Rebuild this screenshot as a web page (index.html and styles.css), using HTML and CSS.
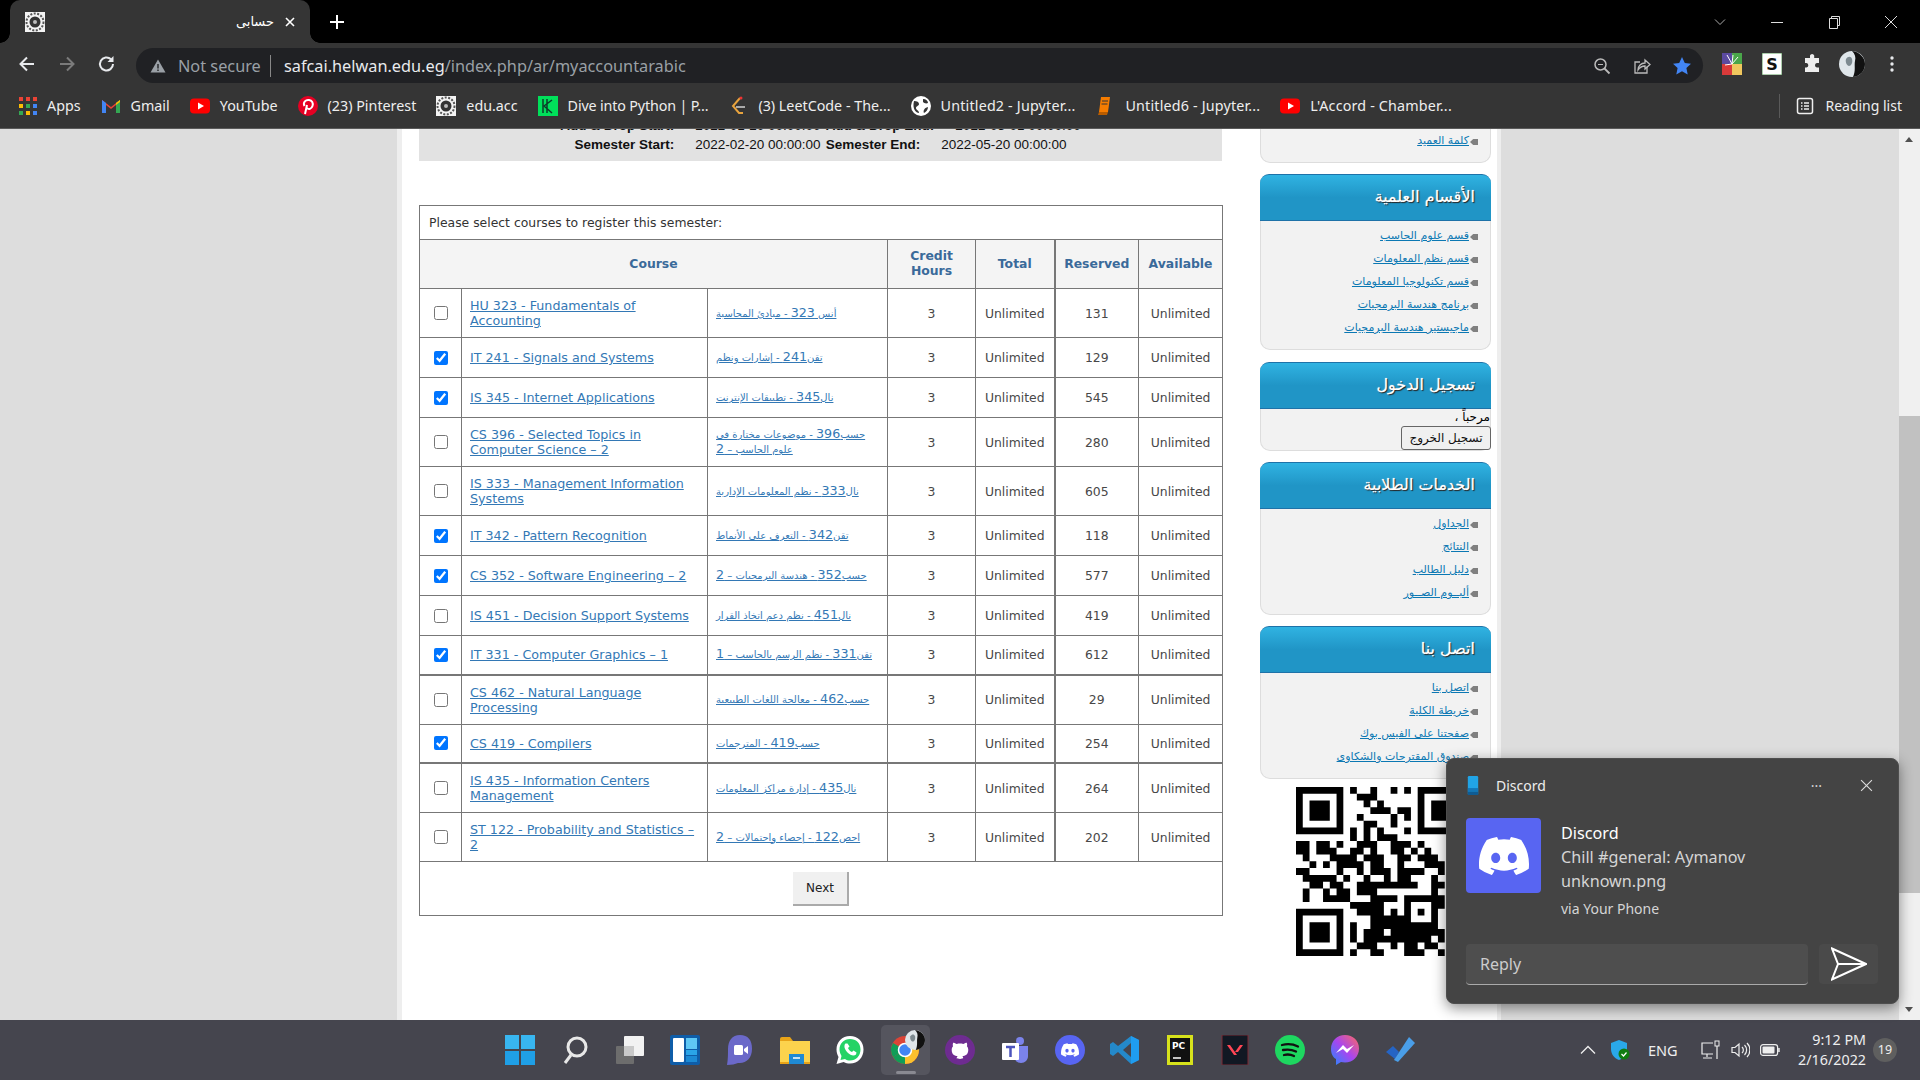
FILE: index.html
```html
<!DOCTYPE html>
<html lang="ar">
<head>
    <meta charset="UTF-8">
    <title>حسابى</title>
    <link rel="stylesheet" href="styles.css">
</head>
<body>

<svg class="defs" width="0" height="0">
    <symbol id="emblem" viewBox="0 0 20 20">
        <rect width="20" height="20" fill="#f4f4f4"/>
        <circle cx="10" cy="10" r="8.5" fill="none" stroke="#555" stroke-width="2" stroke-dasharray="2 1.5"/>
        <circle cx="10" cy="10" r="5.5" fill="#333"/>
        <circle cx="10" cy="10" r="2" fill="#bbb"/>
    </symbol>
    <symbol id="yt" viewBox="0 0 20 20">
        <rect x="0" y="2.5" width="20" height="15" rx="4" fill="#f00"/>
        <path d="M8 6.5v7l6-3.500z" fill="#fff"/>
    </symbol>
    <symbol id="discord" viewBox="0 0 24 24">
        <path fill="#fff" d="M20.317 4.37a19.791 19.791 0 0 0-4.885-1.515.074.074 0 0 0-.079.037c-.21.375-.444.864-.608 1.25a18.27 18.27 0 0 0-5.487 0 12.64 12.64 0 0 0-.617-1.25.077.077 0 0 0-.079-.037A19.736 19.736 0 0 0 3.677 4.37a.07.07 0 0 0-.032.027C.533 9.046-.32 13.58.099 18.057a.082.082 0 0 0 .031.057 19.9 19.9 0 0 0 5.993 3.03.078.078 0 0 0 .084-.028 14.09 14.09 0 0 0 1.226-1.994.076.076 0 0 0-.041-.106 13.107 13.107 0 0 1-1.872-.892.077.077 0 0 1-.008-.128 10.2 10.2 0 0 0 .372-.292.074.074 0 0 1 .077-.01c3.928 1.793 8.18 1.793 12.062 0a.074.074 0 0 1 .078.01c.12.098.246.198.373.292a.077.077 0 0 1-.006.127 12.299 12.299 0 0 1-1.873.892.077.077 0 0 0-.041.107c.36.698.772 1.362 1.225 1.993a.076.076 0 0 0 .084.028 19.839 19.839 0 0 0 6.002-3.03.077.077 0 0 0 .032-.054c.5-5.177-.838-9.674-3.549-13.66a.061.061 0 0 0-.031-.03zM8.02 15.33c-1.183 0-2.157-1.085-2.157-2.419 0-1.333.956-2.419 2.157-2.419 1.21 0 2.176 1.096 2.157 2.42 0 1.333-.956 2.418-2.157 2.418zm7.975 0c-1.183 0-2.157-1.085-2.157-2.419 0-1.333.955-2.419 2.157-2.419 1.21 0 2.176 1.096 2.157 2.42 0 1.333-.946 2.418-2.157 2.418z"/>
    </symbol>
    <symbol id="avatar" viewBox="0 0 26 26">
        <circle cx="13" cy="13" r="13" fill="#dfe6ea"/>
        <path d="M13 0c3 3 4 6 3 10-1 5 1 9-2 16 8-1 12-7 12-13S21 1 13 0z" fill="#111"/>
        <path d="M7 8c2-3 5-3 6 0 1 4-1 7-3 7S6 11 7 8z" fill="#7d8a90"/>
    </symbol>
    <symbol id="grid" viewBox="0 0 18 18">
        <rect x="0" y="0" width="4" height="4" fill="#ea4335"/><rect x="7" y="0" width="4" height="4" fill="#ea4335"/><rect x="14" y="0" width="4" height="4" fill="#ea4335"/>
        <rect x="0" y="7" width="4" height="4" fill="#fbbc04"/><rect x="7" y="7" width="4" height="4" fill="#34a853"/><rect x="14" y="7" width="4" height="4" fill="#4285f4"/>
        <rect x="0" y="14" width="4" height="4" fill="#34a853"/><rect x="7" y="14" width="4" height="4" fill="#fbbc04"/><rect x="14" y="14" width="4" height="4" fill="#4285f4"/>
    </symbol>
</svg>

<header class="chrome">
    <div class="tabstrip">
        <div class="tab">
            <svg class="favicon"><use href="#emblem"/></svg>
            <span class="tab-title">حسابى</span>
            <svg class="tab-close" viewBox="0 0 12 12"><path d="M2 2l8 8M10 2l-8 8" stroke="#fff" stroke-width="1.600"/></svg>
        </div>
        <svg class="new-tab" viewBox="0 0 16 16"><path d="M8 1v14M1 8h14" stroke="#fff" stroke-width="2"/></svg>
        <div class="win-controls">
            <svg viewBox="0 0 14 14"><path d="M2 4.500l5 5 5-5" fill="none" stroke="#aaa"/></svg>
            <svg viewBox="0 0 14 14"><path d="M1 7.500h12" stroke="#ddd"/></svg>
            <svg viewBox="0 0 14 14"><path d="M2.500 3.500h8v10h-8zM4.500 3.500v-2h8v9h-2" fill="none" stroke="#ddd"/></svg>
            <svg viewBox="0 0 14 14"><path d="M1 1l12 12M13 1L1 13" stroke="#ddd"/></svg>
        </div>
    </div>

    <div class="toolbar">
        <svg class="nav" viewBox="0 0 20 20"><path d="M17 10H4M10 3.500L3.500 10l6.500 6.500" fill="none" stroke="#e8eaed" stroke-width="2"/></svg>
        <svg class="nav" viewBox="0 0 20 20"><path d="M3 10h13M10 3.500l6.500 6.500-6.500 6.500" fill="none" stroke="#7b7b7b" stroke-width="2"/></svg>
        <svg class="nav" viewBox="0 0 20 20"><path d="M16 10a6.500 6.500 0 1 1-2-4.700" fill="none" stroke="#e8eaed" stroke-width="2"/><path d="M16.500 2v6h-6z" fill="#e8eaed"/></svg>
        <div class="omnibox">
            <svg class="warn" viewBox="0 0 16 16"><path d="M8 1.500l7.500 13H.5z" fill="#9aa0a6"/><path d="M8 6v4.500M8 11.500v1.500" stroke="#202124" stroke-width="1.400"/></svg>
            <span class="not-secure">Not secure</span>
            <span class="url"><b>safcai.helwan.edu.eg</b>/index.php/ar/myaccountarabic</span>
            <svg class="omni-icon" viewBox="0 0 20 20"><circle cx="8.500" cy="8.500" r="5.500" fill="none" stroke="#bbb" stroke-width="1.500"/><path d="M12.500 12.500l5 5" stroke="#bbb" stroke-width="1.800"/><path d="M6 8.500h5" stroke="#bbb"/></svg>
            <svg class="omni-icon" viewBox="0 0 20 20"><path d="M15 10.500V17H3V6h5" fill="none" stroke="#bbb" stroke-width="1.300"/><path d="M6 14c0-4 3-7 7-7V4l5 4.500-5 4.500v-3c-3 0-5 1-7 4z" fill="none" stroke="#bbb" stroke-width="1.300"/></svg>
            <svg class="omni-icon" viewBox="0 0 20 20"><path d="M10 1l2.800 6 6.200.7-4.600 4.300 1.300 6.500L10 15.200l-5.700 3.300 1.300-6.500L1 7.700 7.200 7z" fill="#4285f4"/></svg>
        </div>
        <div class="ext-icons">
            <svg viewBox="0 0 20 22"><rect width="20" height="22" rx="1" fill="#fff"/><rect x="0" y="0" width="10" height="11" fill="#5b4aa0"/><rect x="10" y="0" width="10" height="11" fill="#4aa64a"/><rect x="0" y="11" width="10" height="11" fill="#d93a3a"/><rect x="10" y="11" width="10" height="11" fill="#f0c75e"/><path d="M10 11L5 2M10 11l1-9M10 11l6-7M10 11l-7 1" stroke="#fff"/></svg>
            <svg viewBox="0 0 20 22"><rect width="20" height="22" fill="#fff" stroke="#5a9a5a"/><text x="10" y="17" class="s-mark">S</text></svg>
            <svg viewBox="0 0 20 20"><path d="M8 1.500a2.200 2.200 0 0 1 4.200 0V4H17v5h-2.200a2.300 2.300 0 0 0 0 4.500H17V18H3v-4.500h1.500a2.300 2.300 0 0 0 0-4.500H3V4h5z" fill="#eee"/></svg>
            <svg viewBox="0 0 26 26"><use href="#avatar"/></svg>
            <svg viewBox="0 0 20 20"><circle cx="10" cy="4" r="1.700" fill="#e8eaed"/><circle cx="10" cy="10" r="1.700" fill="#e8eaed"/><circle cx="10" cy="16" r="1.700" fill="#e8eaed"/></svg>
        </div>
    </div>

    <nav class="bookmarks">
        <a class="bm"><svg viewBox="0 0 18 18"><use href="#grid"/></svg>Apps</a>
        <a class="bm"><svg viewBox="0 0 20 20"><path d="M1 17V4l9 7 9-7v13h-4V9l-5 4-5-4v8z" fill="#ea4335"/><path d="M1 17V4l4 3v10z" fill="#4285f4"/><path d="M15 17V7l4-3v13z" fill="#34a853"/><path d="M15 7l4-3v2l-4 3z" fill="#fbbc04"/></svg>Gmail</a>
        <a class="bm"><svg viewBox="0 0 20 20"><use href="#yt"/></svg>YouTube</a>
        <a class="bm"><svg viewBox="0 0 20 20"><circle cx="10" cy="10" r="10" fill="#e60023"/><path d="M7 18l2-9M6.500 10C4.500 6 8 3.500 11 4s4.500 3 3.500 6-4 4-5.500 2" fill="none" stroke="#fff" stroke-width="2"/></svg>(23) Pinterest</a>
        <a class="bm"><svg viewBox="0 0 20 20"><use href="#emblem"/></svg>edu.acc</a>
        <a class="bm bm-tight"><svg viewBox="0 0 20 20"><rect width="20" height="20" fill="#00e05a"/><path d="M5 3v14M6 10l8-6M6 10l8 7M9 3v14" fill="none" stroke="#0b3b2a" stroke-width="1.500"/></svg>Dive into Python | P...</a>
        <a class="bm"><svg viewBox="0 0 20 20"><path d="M12 2L5 10l6 7h4" fill="none" stroke="#e8a33d" stroke-width="2"/><path d="M8 11h9" stroke="#aaa" stroke-width="2"/><circle cx="13" cy="2" r="1.500" fill="#e33"/></svg>(3) LeetCode - The...</a>
        <a class="bm bm-loose"><svg viewBox="0 0 20 20"><circle cx="10" cy="10" r="10" fill="#fff"/><path d="M3 5c3 0 5 1 5 3s-3 2-3 4 3 2 3 5c-3 0-7-4-5-12zM12 3c3 0 5 2 5 4-2 1-4 0-5-1zM17 11c0 3-2 5-4 6-1-2 0-5 4-6z" fill="#353535"/></svg>Untitled2 - Jupyter...</a>
        <a class="bm bm-loose"><svg viewBox="0 0 20 20"><path d="M6 1h9l-2 15H4z" fill="#f57c00"/><path d="M4 16h9l-1 3H3z" fill="#b85c00"/><path d="M7 5h6M6.500 8h6" stroke="#353535"/></svg>Untitled6 - Jupyter...</a>
        <a class="bm bm-loose"><svg viewBox="0 0 20 20"><use href="#yt"/></svg>L'Accord - Chamber...</a>
        <a class="bm reading"><svg viewBox="0 0 20 20"><rect x="2.500" y="2.500" width="15" height="15" rx="2" fill="none" stroke="#eee" stroke-width="1.500"/><path d="M6 7h1.500M9 7h5M6 10h1.500M9 10h5M6 13h1.500M9 13h5" stroke="#eee" stroke-width="1.300"/></svg>Reading list</a>
    </nav>
</header>

<main class="viewport">
    <div class="page-area">
        <div class="page">
            <section class="content">
                <div class="semester">
                    <div><b>Add &amp; Drop Start:</b><span>2022-01-20 00:00:00</span><b>Add &amp; Drop End:</b><span>2022-03-01 00:00:00</span></div>
                    <div><b>Semester Start:</b><span>2022-02-20 00:00:00</span><b>Semester End:</b><span>2022-05-20 00:00:00</span></div>
                </div>

                <table class="courses">
                    <colgroup>
                        <col class="c-check"><col class="c-en"><col class="c-ar"><col class="c-hours"><col class="c-total"><col class="c-res"><col class="c-avail">
                    </colgroup>
                    <tr class="caption-row"><td colspan="7">Please select courses to register this semester:</td></tr>
                    <tr class="head-row">
                        <th colspan="3">Course</th>
                        <th>Credit<br>Hours</th>
                        <th>Total</th>
                        <th class="thick-l">Reserved</th>
                        <th>Available</th>
                    </tr>
                    <tr>
                        <td class="chk"><input type="checkbox"></td>
                        <td class="en"><a href="#">HU 323 - Fundamentals of Accounting</a></td>
                        <td class="ar"><a href="#">أنس <i>323</i> - مبادئ المحاسبة</a></td>
                        <td>3</td><td>Unlimited</td><td class="thick-l">131</td><td>Unlimited</td>
                    </tr>
                    <tr>
                        <td class="chk"><input type="checkbox" checked></td>
                        <td class="en"><a href="#">IT 241 - Signals and Systems</a></td>
                        <td class="ar"><a href="#">تقن<i>241</i> - إشارات ونظم</a></td>
                        <td>3</td><td>Unlimited</td><td class="thick-l">129</td><td>Unlimited</td>
                    </tr>
                    <tr>
                        <td class="chk"><input type="checkbox" checked></td>
                        <td class="en"><a href="#">IS 345 - Internet Applications</a></td>
                        <td class="ar"><a href="#">نال<i>345</i> - تطبيقات الإنترنت</a></td>
                        <td>3</td><td>Unlimited</td><td class="thick-l">545</td><td>Unlimited</td>
                    </tr>
                    <tr>
                        <td class="chk"><input type="checkbox"></td>
                        <td class="en"><a href="#">CS 396 - Selected Topics in Computer Science – 2</a></td>
                        <td class="ar"><a href="#">حسب<i>396</i> - موضوعات مختارة فى علوم الحاسب – <i>2</i></a></td>
                        <td>3</td><td>Unlimited</td><td class="thick-l">280</td><td>Unlimited</td>
                    </tr>
                    <tr>
                        <td class="chk"><input type="checkbox"></td>
                        <td class="en"><a href="#">IS 333 - Management Information Systems</a></td>
                        <td class="ar"><a href="#">نال<i>333</i> - نظم المعلومات الإدارية</a></td>
                        <td>3</td><td>Unlimited</td><td class="thick-l">605</td><td>Unlimited</td>
                    </tr>
                    <tr>
                        <td class="chk"><input type="checkbox" checked></td>
                        <td class="en"><a href="#">IT 342 - Pattern Recognition</a></td>
                        <td class="ar"><a href="#">تقن<i>342</i> - التعرف على الأنماط</a></td>
                        <td>3</td><td>Unlimited</td><td class="thick-l">118</td><td>Unlimited</td>
                    </tr>
                    <tr>
                        <td class="chk"><input type="checkbox" checked></td>
                        <td class="en"><a href="#">CS 352 - Software Engineering – 2</a></td>
                        <td class="ar"><a href="#">حسب<i>352</i> - هندسة البرمجيات – <i>2</i></a></td>
                        <td>3</td><td>Unlimited</td><td class="thick-l">577</td><td>Unlimited</td>
                    </tr>
                    <tr>
                        <td class="chk"><input type="checkbox"></td>
                        <td class="en"><a href="#">IS 451 - Decision Support Systems</a></td>
                        <td class="ar"><a href="#">نال<i>451</i> - نظم دعم اتخاذ القرار</a></td>
                        <td>3</td><td>Unlimited</td><td class="thick-l">419</td><td>Unlimited</td>
                    </tr>
                    <tr class="thick-b">
                        <td class="chk"><input type="checkbox" checked></td>
                        <td class="en"><a href="#">IT 331 - Computer Graphics – 1</a></td>
                        <td class="ar"><a href="#">تقن<i>331</i> - نظم الرسم بالحاسب – <i>1</i></a></td>
                        <td>3</td><td>Unlimited</td><td class="thick-l">612</td><td>Unlimited</td>
                    </tr>
                    <tr>
                        <td class="chk"><input type="checkbox"></td>
                        <td class="en"><a href="#">CS 462 - Natural Language Processing</a></td>
                        <td class="ar"><a href="#">حسب<i>462</i> - معالجة اللغات الطبيعية</a></td>
                        <td>3</td><td>Unlimited</td><td class="thick-l">29</td><td>Unlimited</td>
                    </tr>
                    <tr class="thick-b">
                        <td class="chk"><input type="checkbox" checked></td>
                        <td class="en"><a href="#">CS 419 - Compilers</a></td>
                        <td class="ar"><a href="#">حسب<i>419</i> - المترجمات</a></td>
                        <td>3</td><td>Unlimited</td><td class="thick-l">254</td><td>Unlimited</td>
                    </tr>
                    <tr>
                        <td class="chk"><input type="checkbox"></td>
                        <td class="en"><a href="#">IS 435 - Information Centers Management</a></td>
                        <td class="ar"><a href="#">نال<i>435</i> - إدارة مراكز المعلومات</a></td>
                        <td>3</td><td>Unlimited</td><td class="thick-l">264</td><td>Unlimited</td>
                    </tr>
                    <tr>
                        <td class="chk"><input type="checkbox"></td>
                        <td class="en"><a href="#">ST 122 - Probability and Statistics – 2</a></td>
                        <td class="ar"><a href="#">احص<i>122</i> - إحصاء واحتمالات – <i>2</i></a></td>
                        <td>3</td><td>Unlimited</td><td class="thick-l">202</td><td>Unlimited</td>
                    </tr>
                    <tr class="next-row"><td colspan="7"><button class="next-btn">Next</button></td></tr>
                </table>
            </section>

            <aside class="sidebar" dir="rtl">
                <div class="panel panel-clipped">
                    <ul class="panel-list"><li><a href="#">كلمة العميد</a></li></ul>
                </div>
                <div class="panel">
                    <h3 class="panel-head">الأقسام العلمية</h3>
                    <ul class="panel-list">
                        <li><a href="#">قسم علوم الحاسب</a></li>
                        <li><a href="#">قسم نظم المعلومات</a></li>
                        <li><a href="#">قسم تكنولوجيا المعلومات</a></li>
                        <li><a href="#">برنامج هندسة البرمجيات</a></li>
                        <li><a href="#">ماجيستير هندسة البرمجيات</a></li>
                    </ul>
                </div>
                <div class="panel panel-login">
                    <h3 class="panel-head">تسجيل الدخول</h3>
                    <div class="welcome">مرحباً ،</div>
                    <button class="logout">تسجيل الخروج</button>
                </div>
                <div class="panel">
                    <h3 class="panel-head">الخدمات الطلابية</h3>
                    <ul class="panel-list">
                        <li><a href="#">الجداول</a></li>
                        <li><a href="#">النتائج</a></li>
                        <li><a href="#">دليل الطالب</a></li>
                        <li><a href="#">ألبــوم الصــور</a></li>
                    </ul>
                </div>
                <div class="panel">
                    <h3 class="panel-head">اتصل بنا</h3>
                    <ul class="panel-list">
                        <li><a href="#">اتصل بنا</a></li>
                        <li><a href="#">خريطة الكلية</a></li>
                        <li><a href="#">صفحتنا على الفيس بوك</a></li>
                        <li><a href="#">صندوق المقترحات والشكاوى</a></li>
                    </ul>
                </div>
                <svg class="qr" viewBox="0 0 25 25">
                    <path fill-rule="evenodd" d="M0 0h7v7H0zM1 1v5h5V1zM2 2h3v3H2zM18 0h7v7h-7zM19 1v5h5V1zM20 2h3v3h-3zM0 18h7v7H0zM1 19v5h5v-5zM2 20h3v3H2z"/>
                    <path stroke="#000" d="M8 .5h1M11 .5h1M14 .5h1M16 .5h1M9 1.500h3M10 2.500h1M12 2.500h1M11 3.500h3M15 3.500h2M9 4.500h1M14 4.500h1M16 4.500h1M10 5.500h2M14 5.500h1M8 6.500h1M10 6.500h1M12 6.500h1M16 6.500h1M8 7.500h1M10 7.500h1M12 7.500h3M0 8.500h2M3 8.500h2M6 8.500h1M9 8.500h3M14 8.500h3M18 8.500h1M0 9.500h2M3 9.500h3M8 9.500h2M11 9.500h1M14 9.500h2M17 9.500h1M19 9.500h1M1 10.500h1M5 10.500h4M10 10.500h3M15 10.500h2M18 10.500h3M2 11.500h1M4 11.500h1M6 11.500h4M11 11.500h2M15 11.500h1M19 11.500h3M0 12.500h2M6 12.500h1M9 12.500h1M11 12.500h3M15 12.500h4M21 12.500h1M1 13.500h5M7 13.500h1M10 13.500h1M13 13.500h1M15 13.500h2M20 13.500h1M2 14.500h2M5 14.500h2M9 14.500h9M20 14.500h2M1 15.500h1M4 15.500h1M6 15.500h2M9 15.500h3M20 15.500h1M1 16.500h1M4 16.500h2M6 16.500h2M11 16.500h4M16 16.500h5M21 16.500h1M8 17.500h5M16 17.500h1M20 17.500h2M9 18.500h4M14 18.500h1M16 18.500h1M18 18.500h1M20 18.500h1M11 19.500h2M13 19.500h4M20 19.500h1M8 20.500h1M11 20.500h3M14 20.500h7M8 21.500h1M10 21.500h3M14 21.500h8M8 22.500h1M10 22.500h4M14 22.500h6M21 22.500h1M9 23.500h3M14 23.500h1M16 23.500h2M19 23.500h2M8 24.500h1M11 24.500h2M16 24.500h3M21 24.500h1"/>
                </svg>
            </aside>
        </div>
    </div>

    <div class="scrollbar">
        <div class="sb-arrow sb-up"></div>
        <div class="sb-track"><div class="sb-thumb"></div></div>
        <div class="sb-arrow sb-down"></div>
    </div>
</main>

<footer class="taskbar">
    <div></div>
    <div class="task-icons">
        <span class="task"><svg viewBox="0 0 30 30"><g fill="#38b6f0"><rect x="0" y="0" width="14" height="14"/><rect x="16" y="0" width="14" height="14"/><rect x="0" y="16" width="14" height="14" fill="#1f9fe6"/><rect x="16" y="16" width="14" height="14" fill="#1f9fe6"/></g></svg></span>
        <span class="task"><svg viewBox="0 0 30 30"><circle cx="17" cy="12" r="9" fill="none" stroke="#e8e8e8" stroke-width="3"/><path d="M11 20l-6 8" stroke="#e8e8e8" stroke-width="3"/></svg></span>
        <span class="task"><svg viewBox="0 0 30 30"><rect x="1" y="11" width="18" height="18" rx="1" fill="#6d6d6d"/><rect x="9" y="1" width="20" height="20" rx="1" fill="#f2f2f2"/><rect x="9" y="11" width="10" height="10" fill="#c9c9c9"/></svg></span>
        <span class="task"><svg viewBox="0 0 30 30"><rect x="0" y="0" width="30" height="30" rx="2" fill="#0f5da8"/><rect x="3" y="3" width="11" height="24" rx="1" fill="#fff"/><rect x="16" y="3" width="11" height="11" fill="#5fc8f5"/><rect x="16" y="15" width="11" height="5" fill="#2aa5e8"/><rect x="16" y="21" width="11" height="6" fill="#1c8ad4"/></svg></span>
        <span class="task"><svg viewBox="0 0 30 30"><path d="M15 0C7 0 3 6 3 14c0 5 0 10-1 16 5 0 8-1 11-2 8 1 14-5 14-14S23 0 15 0z" fill="#6b69c9"/><rect x="9" y="10" width="9" height="10" rx="1.500" fill="#fff"/><path d="M19 14l4-3v8l-4-3z" fill="#fff"/></svg></span>
        <span class="task"><svg viewBox="0 0 30 30"><path d="M0 4a2 2 0 0 1 2-2h8l3 4H0z" fill="#e8a317"/><path d="M0 6h30v22H0z" fill="#fcd34d"/><path d="M0 27h30v2H0z" fill="#e8a317"/><rect x="9" y="19" width="15" height="10" fill="#1f8ad4"/><path d="M13 23h7" stroke="#fff" stroke-width="1.500"/></svg></span>
        <span class="task"><svg viewBox="0 0 30 30"><path d="M15 1C7 1 1.500 7 1.500 14.500c0 3 1 5.500 2 7.500L1.500 29l7.200-2c2 1 4 1.500 6.300 1.500 8 0 13.500-6 13.500-14S23 1 15 1z" fill="#fff"/><path d="M15 4C9 4 4.500 8.500 4.500 14.500c0 2.500 1 4.500 2 6.500l-1 4 4.500-1c1.500 1 3.200 1.500 5 1.500 6 0 10.500-4.500 10.500-11S21 4 15 4z" fill="#25d366"/><path d="M10.500 8.500c-2 2-1 6 2 9s6.500 4 8.500 2l.5-2-3-2-1.500 1.500c-1.500-.5-3.500-2.500-4-4l1.500-1.500-2-3z" fill="#fff"/></svg></span>
        <span class="task task-active">
            <svg viewBox="0 0 30 30"><circle cx="15" cy="15" r="14" fill="#db4437"/><path d="M15 15L3 22a14 14 0 0 0 12 7z" fill="#0f9d58"/><path d="M15 15l12-7a14 14 0 0 1-8 20.500L15 29z" fill="#fbc02d"/><path d="M3 22a14 14 0 0 1 0-14l12 7z" fill="#0f9d58"/><circle cx="15" cy="15" r="6.500" fill="#4285f4" stroke="#fff" stroke-width="1.500"/></svg>
            <svg class="task-avatar" viewBox="0 0 26 26"><use href="#avatar"/></svg>
        </span>
        <span class="task"><svg viewBox="0 0 30 30"><circle cx="15" cy="15" r="15" fill="#6e2c91"/><circle cx="15" cy="14" r="10" fill="#fff"/><svg x="2" y="2" width="26" height="26" viewBox="0 0 24 24"><path fill="#6e2c91" d="M12 .297c-6.630 0-12 5.373-12 12 0 5.303 3.438 9.800 8.205 11.385.6.113.820-.258.820-.577 0-.285-.010-1.040-.015-2.040-3.338.724-4.042-1.610-4.042-1.610C4.422 18.070 3.633 17.700 3.633 17.700c-1.087-.744.084-.729.084-.729 1.205.084 1.838 1.236 1.838 1.236 1.070 1.835 2.809 1.305 3.495.998.108-.776.417-1.305.760-1.605-2.665-.3-5.466-1.332-5.466-5.930 0-1.310.465-2.380 1.235-3.220-.135-.303-.54-1.523.105-3.176 0 0 1.005-.322 3.300 1.230.96-.267 1.980-.399 3-.405 1.020.006 2.040.138 3 .405 2.280-1.552 3.285-1.230 3.285-1.230.645 1.653.24 2.873.12 3.176.765.840 1.230 1.910 1.230 3.220 0 4.610-2.805 5.625-5.475 5.920.42.360.810 1.096.810 2.220 0 1.606-.015 2.896-.015 3.286 0 .315.21.69.825.57C20.565 22.092 24 17.592 24 12.297c0-6.627-5.373-12-12-12"/></svg></svg></span>
        <span class="task"><svg viewBox="0 0 30 30"><circle cx="20" cy="6" r="4" fill="#7b83eb"/><path d="M14 11h14v10c0 4-3 7-7 7s-7-3-7-7z" fill="#7b83eb"/><rect x="2" y="8" width="17" height="17" rx="1" fill="#fff"/><path d="M6 12h9M10.500 12v10" stroke="#4b53bc" stroke-width="2.500"/></svg></span>
        <span class="task"><svg viewBox="0 0 30 30"><circle cx="15" cy="15" r="15" fill="#5865f2"/><svg x="6" y="6" width="18" height="18" viewBox="0 0 24 24"><use href="#discord"/></svg></svg></span>
        <span class="task"><svg viewBox="0 0 30 30"><path d="M21 1l8 4v20l-8 4-13-12-5 4-3-2v-10l3-2 5 4z" fill="#2489ca"/><path d="M21 8l-8 7 8 7z" fill="#45454e"/><path d="M21 1l8 4v20l-8 4z" fill="#1f9cf0"/></svg></span>
        <span class="task"><svg viewBox="0 0 30 30"><rect x="2" y="0" width="26" height="30" fill="#d7e21c"/><rect x="5" y="3" width="20" height="24" fill="#111"/><text x="7" y="14" class="pc-mark">PC</text><path d="M8 23h8" stroke="#fff" stroke-width="1.500"/></svg></span>
        <span class="task"><svg viewBox="0 0 30 30"><rect x="2" y="0" width="26" height="30" fill="#111823" stroke="#7a2b35"/><path d="M7 10l7 10h3L10 10zM23 10l-5 7h-3l5-7z" fill="#ff4655"/></svg></span>
        <span class="task"><svg viewBox="0 0 30 30"><circle cx="15" cy="15" r="15" fill="#1ed760"/><path d="M7 10c6-1.500 11-1 16 1.500M8 15c5-1 9-.500 13 1.500M9 20c4-1 7-.500 10 1" fill="none" stroke="#111" stroke-width="2.300" stroke-linecap="round"/></svg></span>
        <span class="task"><svg viewBox="0 0 30 30"><defs><linearGradient id="msg" x1="0" y1="1" x2="1" y2="0"><stop offset="0" stop-color="#1e8cff"/><stop offset=".5" stop-color="#a845f0"/><stop offset="1" stop-color="#ff6a5e"/></linearGradient></defs><path d="M15 0C7 0 1 6 1 14c0 4 1.500 8 5 10v6l5-3c1 .3 2.500.5 4 .5 8 0 14-6 14-14S23 0 15 0z" fill="url(#msg)"/><path d="M6 18l7-8 4 4 7-4-7 8-4-4z" fill="#fff"/></svg></span>
        <span class="task"><svg viewBox="0 0 30 30"><path d="M1 17l7-6 6 6-4 7z" fill="#2564c4"/><path d="M9 25L24 2l6 6-17 19z" fill="#4a9ee8"/></svg></span>
    </div>
    <div class="tray">
        <svg class="tray-chev" viewBox="0 0 16 10"><path d="M1 8.500l7-7 7 7" fill="none" stroke="#eee" stroke-width="1.300"/></svg>
        <svg class="tray-shield" viewBox="0 0 20 20"><path d="M9 0l8 3v6c0 5-3 9-8 11C4 18 1 14 1 9V3z" fill="#2aa8e8"/><circle cx="14" cy="14" r="5.500" fill="#107c10"/><path d="M11.500 14l2 2 3-3.500" fill="none" stroke="#fff" stroke-width="1.200"/></svg>
        <span class="tray-lang">ENG</span>
        <svg class="tray-net" viewBox="0 0 20 20"><path d="M13 3H2v11h11M7 14v3M3 18h9" fill="none" stroke="#eee" stroke-width="1.200"/><rect x="15" y="1" width="4" height="5" fill="none" stroke="#eee"/><path d="M17 6v13" stroke="#eee" stroke-width="1.200"/></svg>
        <svg class="tray-sound" viewBox="0 0 20 20"><path d="M2 7.500h3l4-3.500v12l-4-3.500H2z" fill="none" stroke="#eee" stroke-width="1.200"/><path d="M12 7a4 4 0 0 1 0 6M14.500 5a7 7 0 0 1 0 10M17 3a10 10 0 0 1 0 14" fill="none" stroke="#eee" stroke-width="1.200"/></svg>
        <svg class="tray-batt" viewBox="0 0 20 12"><rect x=".6" y=".6" width="17" height="10.800" rx="2.500" fill="none" stroke="#eee" stroke-width="1.200"/><rect x="2.500" y="2.500" width="12" height="7" rx="1" fill="#eee"/><rect x="18.200" y="4" width="1.500" height="4" fill="#eee"/></svg>
        <div class="clock"><div>9:12 PM</div><div>2/16/2022</div></div>
        <span class="badge">19</span>
    </div>
</footer>

<div class="toast">
    <div class="toast-top">
        <svg class="toast-phone" viewBox="0 0 12 22"><rect width="12" height="22" rx="1.500" fill="#21a4e6"/><rect y="14" width="12" height="4" fill="#1477b8"/><rect y="18" width="12" height="4" fill="#0f5c94"/></svg>
        <span class="toast-app">Discord</span>
        <span class="toast-dots">···</span>
        <svg class="toast-x" viewBox="0 0 12 12"><path d="M1 1l10 10M11 1L1 11" stroke="#ddd"/></svg>
    </div>
    <div class="toast-body">
        <div class="toast-logo"><svg viewBox="0 0 24 24"><use href="#discord"/></svg></div>
        <div class="toast-text">
            <div class="toast-title">Discord</div>
            <div>Chill #general: Aymanov</div>
            <div>unknown.png</div>
            <div class="toast-via">via Your Phone</div>
        </div>
    </div>
    <div class="toast-reply">
        <div class="reply-box">Reply</div>
        <div class="send-btn"><svg viewBox="0 0 36 34"><path d="M1 1.500L35 17 1 32.500 7 17zM7 17h28" fill="none" stroke="#fff" stroke-width="2"/></svg></div>
    </div>
</div>

</body>
</html>
```

FILE: styles.css
```css
* {
    box-sizing: border-box;
}
html, body {
    margin: 0;
    height: 100%;
    overflow: hidden;
}
body {
    width: 1920px;
    height: 1080px;
    display: flex;
    flex-direction: column;
    position: relative;
    font-family: "DejaVu Sans", sans-serif;
    background: #ddd;
}
.defs {
    position: absolute;
}
svg {
    display: block;
    flex: none;
}

/* browser chrome */
.chrome {
    flex: none;
    font-family: "Noto Sans", sans-serif;
    color: #e8eaed;
}
.tabstrip {
    height: 43px;
    background: #000;
    display: flex;
    align-items: center;
}
.tab {
    width: 300px;
    height: 43px;
    margin-left: 10px;
    padding-left: 15px;
    background: #353535;
    border-radius: 10px 10px 0 0;
    display: flex;
    align-items: center;
    position: relative;
}
.tab::before, .tab::after {
    content: "";
    position: absolute;
    bottom: 0;
    width: 10px;
    height: 10px;
}
.tab::before {
    left: -10px;
    background: radial-gradient(circle at 0 0, #000 9.5px, #353535 10px);
}
.tab::after {
    right: -10px;
    background: radial-gradient(circle at 100% 0, #000 9.5px, #353535 10px);
}
.favicon {
    width: 20px;
    height: 20px;
}
.tab-title {
    flex: 1;
    text-align: right;
    font: 13px "DejaVu Sans", sans-serif;
    color: #fff;
}
.tab-close {
    width: 12px;
    height: 12px;
    margin: 0 14px 0 10px;
}
.new-tab {
    width: 16px;
    height: 16px;
    margin-left: 19px;
}
.win-controls {
    margin-left: auto;
    padding-right: 22px;
    display: flex;
    gap: 43px;
}
.win-controls svg {
    width: 14px;
    height: 14px;
}
.toolbar {
    height: 42px;
    background: #353535;
    padding-left: 17px;
    display: flex;
    align-items: center;
}
.nav {
    width: 20px;
    height: 20px;
    margin-right: 20px;
}
.nav:nth-child(3) {
    margin-right: 19px;
}
.omnibox {
    width: 1567px;
    height: 35px;
    margin-top: 3px;
    background: #202124;
    border-radius: 18px;
    display: flex;
    align-items: center;
    padding-left: 14px;
    font-size: 16.3px;
}
.warn {
    width: 16px;
    height: 16px;
}
.not-secure {
    margin-left: 12px;
    border-right: 1px solid #888;
    color: #9aa0a6;
    line-height: 22px;
    width: 93px;
    white-space: nowrap;
}
.url {
    margin-left: 13px;
    color: #9aa0a6;
    white-space: nowrap;
}
.url b {
    font-weight: 400;
    color: #e8eaed;
}
.omni-icon {
    width: 20px;
    height: 20px;
    margin-left: 20px;
}
.omni-icon:nth-of-type(2) {
    margin-left: auto;
}
.omni-icon:last-child {
    margin-right: 11px;
}
.ext-icons {
    margin-left: 19px;
    display: flex;
    align-items: center;
    gap: 20px;
}
.ext-icons svg {
    width: 20px;
    height: 22px;
}
.ext-icons svg:nth-child(4) {
    width: 26px;
    height: 26px;
    margin: 0 -3px;
}
.s-mark {
    font: bold 16px "DejaVu Sans", sans-serif;
    text-anchor: middle;
    fill: #111;
}
.bookmarks {
    height: 44px;
    background: #353535;
    border-bottom: 1px solid #5a5a5a;
    padding: 0 0 2px 19px;
    display: flex;
    align-items: center;
    gap: 20px;
    font-size: 14.3px;
    color: #eee;
}
.bm {
    display: flex;
    align-items: center;
    gap: 10px;
    white-space: nowrap;
}
.bm svg {
    width: 20px;
    height: 20px;
}
.bm:first-child svg {
    width: 18px;
    height: 18px;
}
.bm-tight {
    letter-spacing: -.15px;
}
.bm-loose {
    letter-spacing: .18px;
}
.reading {
    margin-left: auto;
    margin-right: 18px;
    padding-left: 15px;
    border-left: 1px solid #5a5a5a;
    height: 24px;
    font-size: 14px;
}

/* page */
.viewport {
    flex: 1;
    min-height: 0;
    display: flex;
    overflow: hidden;
}
.page-area {
    flex: 1;
    overflow: hidden;
}
.page {
    width: 1104px;
    height: 100%;
    margin: 0 0 0 397px;
    padding: 0 6px 0 17px;
    background: #fff;
    border: solid #eee;
    border-width: 0 4px 0 5px;
    display: flex;
    font-size: 12.4px;
}
.content {
    width: 803px;
    flex: none;
    color: #484848;
}
.semester {
    margin-top: -18px;
    padding: 5px 0 7px;
    background: #e2e2e2;
    font: 13.5px/19px "Liberation Sans", Arial, sans-serif;
    color: #111;
    text-align: center;
}
.semester span {
    margin: 0 5px 0 21px;
}
.semester span:last-child {
    margin-right: 0;
}
.courses {
    width: 803px;
    margin-top: 44px;
    table-layout: fixed;
    border-collapse: collapse;
    border: 1px solid #666;
}
.c-check { width: 42px; }
.c-en { width: 246px; }
.c-ar { width: 180px; }
.c-hours { width: 88px; }
.c-total { width: 79px; }
.c-res { width: 84px; }
.c-avail { width: 84px; }
.courses td, .courses th {
    border: 1px solid #777;
    height: 40px;
    padding: 9px 1px;
    text-align: center;
    line-height: 15px;
}
.courses .caption-row td {
    height: 34px;
    padding: 0 9px;
    text-align: left;
    color: #333;
}
.courses .head-row th {
    height: 49px;
    padding: 7px 1px 9px;
    background: #f4f4f4;
    color: #3a6a9a;
}
.courses .chk {
    padding: 0;
}
.chk input {
    display: block;
    width: 14px;
    height: 14px;
    margin: 0 auto;
}
.courses td.en, .courses td.ar {
    padding: 9px 8px;
    text-align: left;
}
.courses td.en {
    font-size: 12.7px;
}
.courses td.ar {
    font-size: 10px;
}
.ar i {
    font-style: normal;
    font-size: 12.7px;
    line-height: 10px;
}
.courses a {
    color: #3378b5;
}
.courses .thick-l {
    border-left-width: 2px;
}
.courses .thick-b td {
    height: 39px;
    border-bottom-width: 2px;
}
.courses .next-row td {
    height: 54px;
    padding: 0;
}
.next-btn {
    width: 56px;
    height: 34px;
    display: block;
    margin: 0 auto;
    border: solid #aaa;
    border-width: 0 2px 2px 0;
    background: #f0f0f0;
    font: 12px "DejaVu Sans", sans-serif;
    color: #222;
}

/* right column */
.sidebar {
    width: 231px;
    flex: none;
    margin-left: 38px;
}
.panel {
    margin-bottom: 11px;
    background: #f2f2f2;
    border: 1px solid #ddd;
    border-top: 0;
    border-radius: 10px;
}
.panel-clipped {
    margin-top: -12px;
    height: 46px;
    border-radius: 0 0 10px 10px;
}
.panel-clipped .panel-list {
    padding-top: 13px;
}
.panel-head {
    height: 47px;
    margin: 0 -1px;
    padding-right: 16px;
    background: linear-gradient(#30b3e2, #2095c6 50%, #2095c6);
    border: 1px solid #1e72a8;
    border-width: 1px 0;
    border-radius: 9px 9px 0 0;
    color: #fff;
    font-size: 16px;
    font-weight: 400;
    line-height: 44px;
    text-shadow: 1px 1px 1px #222, 0 0 1px #fff;
}
.panel-list {
    list-style: none;
    margin: 0;
    padding: 4px 12px 9px 0;
}
.panel-list li {
    height: 23px;
    line-height: 21px;
    padding-right: 9px;
    position: relative;
    white-space: nowrap;
    font-size: 11px;
}
.panel-list li::before {
    content: "";
    position: absolute;
    right: 0;
    top: 9px;
    width: 8px;
    height: 6px;
    background: #808080;
    clip-path: polygon(0 50%, 40% 0, 100% 0, 100% 100%, 40% 100%);
}
.panel-list a {
    color: #0b78b3;
}
.panel-login {
    margin-top: 12px;
}
.welcome {
    font-size: 12px;
    line-height: 17px;
}
.logout {
    display: block;
    width: 90px;
    height: 24px;
    margin-right: -1px;
    padding: 0;
    background: #f0f0f0;
    border: 1px solid #666;
    border-radius: 3px;
    font: 12px "DejaVu Sans", sans-serif;
    color: #111;
}
.qr {
    width: 169px;
    height: 169px;
    margin: -3px 26px 0 0;
}

/* scrollbar */
.scrollbar {
    width: 21px;
    flex: none;
    background: #f0f0f0;
    display: flex;
    flex-direction: column;
}
.sb-arrow {
    height: 21px;
    flex: none;
    position: relative;
}
.sb-up::after, .sb-down::after {
    content: "";
    position: absolute;
    left: 6px;
    top: 8px;
    border: 4.5px solid transparent;
    border-top-width: 0;
    border-bottom: 5px solid #505050;
}
.sb-down::after {
    border-bottom-width: 0;
    border-top: 5px solid #505050;
}
.sb-track {
    flex: 1;
    padding-top: 266px;
}
.sb-thumb {
    height: 477px;
    background: #c1c1c1;
}

/* taskbar */
.taskbar {
    height: 60px;
    flex: none;
    background: #45454e;
    display: grid;
    grid-template-columns: 1fr auto 1fr;
    align-items: center;
    font-family: "Noto Sans", sans-serif;
    color: #eee;
}
.task-icons {
    display: flex;
}
.task {
    width: 55px;
    height: 50px;
    display: flex;
    align-items: center;
    justify-content: center;
    position: relative;
}
.task > svg {
    width: 30px;
    height: 30px;
}
.task-active {
    width: 49px;
    margin: 0 3px;
    background: #55555e;
    border-radius: 5px;
}
.task-active::after {
    content: "";
    position: absolute;
    bottom: 1px;
    left: 15px;
    width: 20px;
    height: 3px;
    border-radius: 2px;
    background: #8a8a92;
}
.task > .task-avatar {
    position: absolute;
    left: 24px;
    top: 4px;
    width: 20px;
    height: 22px;
}
.tray {
    display: flex;
    align-items: center;
    justify-content: flex-end;
    padding-right: 23px;
}
.tray-chev {
    width: 16px;
    height: 10px;
    margin-right: 14px;
}
.tray-shield {
    width: 20px;
    height: 20px;
    margin-right: 18px;
}
.tray-lang {
    font-size: 14.5px;
    width: 30px;
    margin-right: 22px;
    white-space: nowrap;
}
.tray-net, .tray-sound {
    width: 20px;
    height: 20px;
    margin-right: 10px;
}
.tray-batt {
    width: 20px;
    height: 12px;
    margin-right: 11px;
}
.clock {
    width: 75px;
    text-align: right;
    font-size: 14.3px;
    line-height: 20px;
    white-space: nowrap;
}
.badge {
    width: 24px;
    height: 24px;
    margin-left: 7px;
    border-radius: 50%;
    background: #5f5f5f;
    font-size: 12.5px;
    line-height: 24px;
    text-align: center;
}

/* toast notification */
.toast {
    position: absolute;
    left: 1446px;
    top: 758px;
    width: 453px;
    height: 246px;
    padding: 0 20px 0 19px;
    background: #444;
    border: 1px solid #4e4e4e;
    border-radius: 8px;
    box-shadow: 0 4px 14px rgba(0, 0, 0, .45);
    font-family: "Noto Sans", sans-serif;
    color: #d5d5d5;
}
.toast-top {
    height: 59px;
    display: flex;
    align-items: center;
    padding-bottom: 7px;
}
.toast-phone {
    width: 12px;
    height: 19px;
    margin-left: 1px;
}
.toast-app {
    margin-left: 17px;
    font-size: 14px;
    color: #eee;
}
.toast-dots {
    margin-left: auto;
    font-size: 14px;
}
.toast-x {
    width: 13px;
    height: 13px;
    margin: 0 5px 0 38px;
}
.toast-body {
    display: flex;
    height: 126px;
}
.toast-logo {
    width: 75px;
    height: 75px;
    background: #5865f2;
    border-radius: 4px;
    display: flex;
    align-items: center;
    justify-content: center;
}
.toast-logo svg {
    width: 50px;
    height: 50px;
}
.toast-text {
    margin-left: 20px;
    font-size: 16.2px;
    line-height: 24px;
    margin-top: 3px;
}
.toast-title {
    color: #fff;
}
.toast-via {
    font-size: 14px;
    margin-top: 4px;
}
.toast-reply {
    display: flex;
    gap: 11px;
}
.reply-box {
    width: 344px;
    height: 41px;
    padding-left: 14px;
    background: #4e4e4e;
    border-bottom: 1px solid #aaa;
    border-radius: 4px;
    font-size: 16px;
    line-height: 40px;
    color: #ccc;
}
.send-btn {
    width: 59px;
    height: 40px;
    background: #4a4a4a;
    border-radius: 4px;
    display: flex;
    align-items: center;
    justify-content: center;
}
.send-btn svg {
    width: 36px;
    height: 34px;
}
.pc-mark {
    font: bold 9px "DejaVu Sans", sans-serif;
    fill: #fff;
}
```
